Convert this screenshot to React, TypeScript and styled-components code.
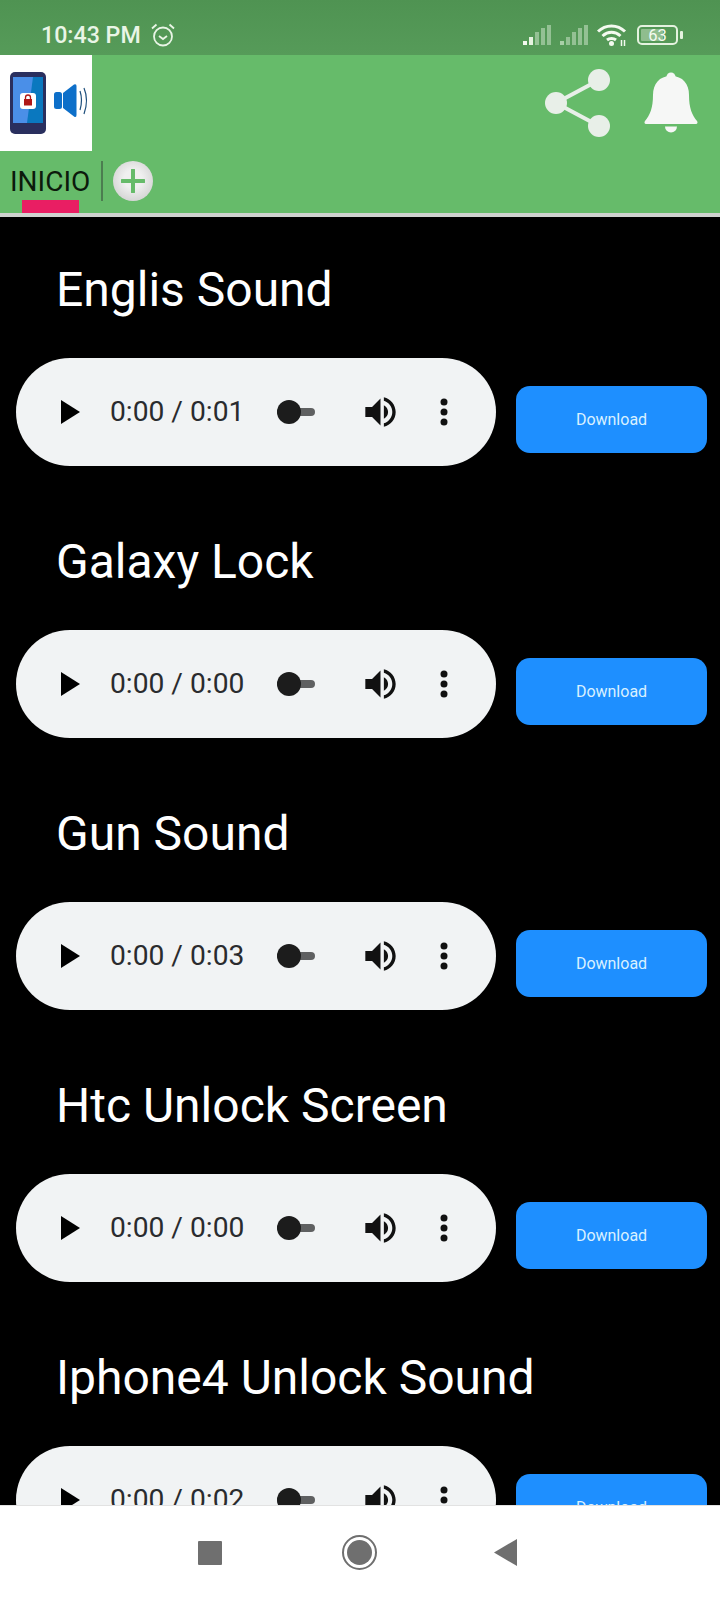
import React from "react";
import styled, { createGlobalStyle } from "styled-components";

const Global = createGlobalStyle`
  html, body { margin: 0; padding: 0; background: #000; }
  * { box-sizing: border-box; }
`;

const Screen = styled.div`
  width: 720px;
  height: 1600px;
  display: flex;
  flex-direction: column;
  overflow: hidden;
  font-family: Roboto, "Liberation Sans", sans-serif;
  background: #000;
`;

const StatusBar = styled.div`
  height: 55px;
  flex: none;
  display: flex;
  align-items: center;
  padding: 15px 37px 0 41px;
  background: linear-gradient(#4f9352, #569b59);
  color: #e9f5e6;
`;

const Clock = styled.span`
  font-size: 23.2px;
  font-weight: 500;
  margin-right: 10px;
`;

const StatusRight = styled.div`
  margin-left: auto;
  display: flex;
  align-items: center;
  gap: 9px;
`;

const Battery = styled.div`
  position: relative;
  width: 41px;
  height: 20px;
  border: 2px solid #e4f2df;
  border-radius: 5px;
  margin-right: 5px;
  margin-left: 1px;
  display: flex;
  align-items: center;
  justify-content: center;
  font-size: 16.5px;
  color: #f4faf0;
  &::before {
    content: "";
    position: absolute;
    left: 2px;
    top: 2px;
    bottom: 2px;
    width: 22px;
    border-radius: 1px;
    background: #8fbd8e;
  }
  &::after {
    content: "";
    position: absolute;
    right: -7px;
    top: 4px;
    width: 3px;
    height: 8px;
    border-radius: 1px;
    background: #e4f2df;
  }
`;

const BatteryLevel = styled.span`
  position: relative;
  z-index: 1;
`;

const AppBar = styled.header`
  height: 158px;
  flex: none;
  display: flex;
  flex-direction: column;
  background: #66bb6a;
`;

const TopRow = styled.div`
  height: 96px;
  flex: none;
  display: flex;
  align-items: flex-start;
`;

const Logo = styled.div`
  width: 92px;
  height: 96px;
  background: #fff;
  flex: none;
`;

const Actions = styled.div`
  margin-left: auto;
  margin-right: 22px;
  padding-top: 13px;
  display: flex;
  align-items: flex-start;
  gap: 33px;
`;

const Tabs = styled.div`
  flex: 1;
  display: flex;
  align-items: flex-start;
  padding: 10px 0 0 10px;
`;

const Tab = styled.div`
  position: relative;
  width: 82px;
  height: 52px;
  padding-top: 5px;
  color: #0c1a0c;
  font-size: 28px;
  line-height: 32px;
  white-space: nowrap;
  &::after {
    content: "";
    position: absolute;
    left: 12px;
    top: 39px;
    width: 57px;
    height: 13px;
    background: #e91e63;
  }
`;

const TabDivider = styled.div`
  width: 2px;
  height: 40px;
  margin: 0 10px 0 9px;
  background: #4c7d50;
`;

const AddTab = styled.div`
  width: 40px;
  height: 40px;
  border-radius: 50%;
  background: radial-gradient(circle at 50% 45%, #f0f0f0 30%, #c6c6c6 100%);
  display: flex;
  align-items: center;
  justify-content: center;
`;

const Rule = styled.div`
  height: 4px;
  flex: none;
  background: #cfd3cf;
`;

const List = styled.main`
  flex: 1;
  overflow: hidden;
  background: #000;
`;

const Sound = styled.section`
  padding: 41px 0 23px;
`;

const Title = styled.h2`
  margin: 0 0 38px;
  padding: 1px 0 0 56px;
  height: 62px;
  line-height: 62px;
  font-size: 48px;
  font-weight: 400;
  color: #fff;
  white-space: nowrap;
`;

const Row = styled.div`
  display: flex;
  align-items: center;
  padding-left: 16px;
  gap: 20px;
`;

const Player = styled.div`
  width: 480px;
  height: 108px;
  border-radius: 54px;
  background: #f1f3f4;
  display: flex;
  align-items: center;
  padding-left: 45px;
  color: #1f1f1f;
  flex: none;
`;

const Time = styled.span`
  margin-left: 30px;
  width: 133px;
  font-size: 28.2px;
  line-height: 32px;
  white-space: nowrap;
  color: #2a2b2e;
`;

const Slider = styled.div`
  position: relative;
  margin-left: 34px;
  width: 38px;
  height: 8px;
  border-radius: 4px;
  background: #5f6061;
  &::before {
    content: "";
    position: absolute;
    left: 0;
    top: -8px;
    width: 24px;
    height: 24px;
    border-radius: 50%;
    background: #1c1c1c;
  }
`;

const Mute = styled.div`
  margin-left: 50px;
  display: flex;
`;

const More = styled.div`
  margin-left: 43px;
  display: flex;
`;

const DownloadButton = styled.button`
  width: 191px;
  height: 67px;
  margin-top: 15px;
  padding: 0;
  border: none;
  border-radius: 14px;
  background: #1e8fff;
  color: #d9f1ff;
  font-family: inherit;
  font-size: 16px;
  flex: none;
`;

const NavBar = styled.nav`
  height: 95px;
  flex: none;
  position: relative;
  background: #fff;
  border-top: 1px solid #e2e2e2;
  display: flex;
  align-items: flex-start;
  padding: 29px 0 0 198px;
`;

const NavSquare = styled.div`
  width: 24px;
  height: 24px;
  margin-top: 6px;
  border-radius: 1px;
  background: #6f6f6f;
`;

const NavHome = styled.div`
  width: 35px;
  height: 35px;
  margin-left: 120px;
  border-radius: 50%;
  border: 2px solid #6f6f6f;
  display: flex;
  align-items: center;
  justify-content: center;
  &::before {
    content: "";
    width: 25px;
    height: 25px;
    border-radius: 50%;
    background: #6f6f6f;
  }
`;

const NavBack = styled.div`
  width: 23px;
  height: 27px;
  margin: 4px 0 0 117px;
  background: #6f6f6f;
  clip-path: polygon(0 50%, 100% 0, 100% 100%);
`;

const sounds = [
  { name: "Englis Sound", time: "0:00 / 0:01" },
  { name: "Galaxy Lock", time: "0:00 / 0:00" },
  { name: "Gun Sound", time: "0:00 / 0:03" },
  { name: "Htc Unlock Screen", time: "0:00 / 0:00" },
  { name: "Iphone4 Unlock Sound", time: "0:00 / 0:02" },
];

const Signal = ({ dim }: { dim?: boolean }) => (
  <svg width="28" height="20" viewBox="0 0 28 20">
    <rect x="0" y="16" width="4" height="4" fill={dim ? "#a9cfa8" : "#f2f8ee"} />
    <rect x="6" y="12" width="4" height="8" fill={dim ? "#94c194" : "#e6f2e0"} />
    <rect x="12" y="7" width="4" height="13" fill="#94c194" />
    <rect x="18" y="3" width="4" height="17" fill="#94c194" />
    <rect x="24" y="0" width="4" height="20" fill="#94c194" />
  </svg>
);

export default function App() {
  return (
    <Screen>
      <Global />
      <StatusBar>
        <Clock>10:43 PM</Clock>
        <svg width="24" height="24" viewBox="0 0 24 24" fill="none" stroke="#e9f5e6" strokeWidth="1.8">
          <circle cx="12" cy="13.5" r="9" />
          <path d="M8 13l4 3 4-3" />
          <path d="M1 5.5L5.5 1.500M23 5.5L18.5 1.5" />
        </svg>
        <StatusRight>
          <Signal />
          <Signal dim />
          <svg width="30" height="22" viewBox="0 0 30 22" fill="none" stroke="#f4faf0" strokeWidth="3">
            <path d="M1 7.500C8.500 0 20.500 0 28 7.500" />
            <path d="M5.500 12C11 7 18 7 23.500 12" />
            <path d="M10 16C12.500 14 16.500 14 19 16" />
            <circle cx="14.500" cy="19.500" r="2.500" fill="#f4faf0" stroke="none" />
            <path d="M24.500 16v6M27.500 16v6" strokeWidth="1.500" />
          </svg>
          <Battery>
            <BatteryLevel>63</BatteryLevel>
          </Battery>
        </StatusRight>
      </StatusBar>
      <AppBar>
        <TopRow>
          <Logo>
            <svg width="92" height="96" viewBox="0 0 92 96">
              <rect x="10" y="17" width="36" height="62" rx="5" fill="#2a2f5e" />
              <rect x="13" y="22" width="30" height="46" fill="#4a8fe8" />
              <path d="M33 22h10v46H27z" fill="#0a78bf" />
              <rect x="20" y="38" width="16" height="16" rx="3" fill="#fff" />
              <rect x="24" y="44" width="8" height="6.500" fill="#b01818" />
              <path d="M25.500 44v-1.500a2.500 2.500 0 0 1 5 0V44" fill="none" stroke="#b01818" strokeWidth="1.300" />
              <rect x="54" y="37" width="8" height="17" rx="2.500" fill="#0d6fc9" />
              <path d="M63 38L74 29.500Q76.500 28.500 76.500 31V60Q76.500 63 74 61.500L63 53Z" fill="#0d6fc9" />
              <path d="M80 36Q83 45 80 55" fill="none" stroke="#1e4f7c" strokeWidth="1.200" />
              <path d="M84 33Q89 45 84 59" fill="none" stroke="#1e4f7c" strokeWidth="1.200" />
            </svg>
          </Logo>
          <Actions>
            <svg width="66" height="70" viewBox="0 0 66 70">
              <path d="M54 12L11 35L54 58" fill="none" stroke="#e8efe8" strokeWidth="4" />
              <circle cx="54" cy="12" r="11" fill="#e8efe8" />
              <circle cx="11" cy="35" r="11" fill="#e8efe8" />
              <circle cx="54" cy="58" r="11" fill="#e8efe8" />
            </svg>
            <svg width="54" height="68" viewBox="0 0 54 68">
              <circle cx="27" cy="9" r="4.500" fill="#f6f7f6" />
              <path d="M27 8C15 8 9 16 9 27C9 40 6 47 1 53C0 54.500 .5 56 2 56H52C53.500 56 54 54.500 53 53C48 47 45 40 45 27C45 16 39 8 27 8Z" fill="#f6f7f6" />
              <path d="M21 58.500H33A6 6 0 0 1 21 58.500Z" fill="#f6f7f6" />
            </svg>
          </Actions>
        </TopRow>
        <Tabs>
          <Tab>INICIO</Tab>
          <TabDivider />
          <AddTab>
            <svg width="24" height="24" viewBox="0 0 24 24">
              <path d="M12 1v22M1 12h22" stroke="#66bb6a" strokeWidth="4" strokeLinecap="round" />
            </svg>
          </AddTab>
        </Tabs>
      </AppBar>
      <Rule />
      <List>
        {sounds.map((s) => (
          <Sound key={s.name}>
            <Title>{s.name}</Title>
            <Row>
              <Player>
                <svg width="19" height="24" viewBox="0 0 19 24">
                  <path d="M0 0L19 12L0 24Z" fill="#000" />
                </svg>
                <Time>{s.time}</Time>
                <Slider />
                <Mute>
                  <svg width="31" height="30" viewBox="3 3.100 18 17.800">
                    <path
                      d="M3 9v6h4l5 5V4L7 9H3zm13.500 3c0-1.770-1.020-3.290-2.500-4.030v8.050c1.480-.73 2.500-2.250 2.500-4.020zM14 3.230v2.060c2.890.86 5 3.540 5 6.710s-2.110 5.850-5 6.710v2.060c4.010-.91 7-4.490 7-8.770s-2.990-7.860-7-8.770z"
                      fill="#111"
                    />
                  </svg>
                </Mute>
                <More>
                  <svg width="10" height="28" viewBox="0 0 10 28">
                    <circle cx="5" cy="4" r="3.500" fill="#111" />
                    <circle cx="5" cy="14" r="3.500" fill="#111" />
                    <circle cx="5" cy="24" r="3.500" fill="#111" />
                  </svg>
                </More>
              </Player>
              <DownloadButton>Download</DownloadButton>
            </Row>
          </Sound>
        ))}
      </List>
      <NavBar>
        <NavSquare />
        <NavHome />
        <NavBack />
      </NavBar>
    </Screen>
  );
}
